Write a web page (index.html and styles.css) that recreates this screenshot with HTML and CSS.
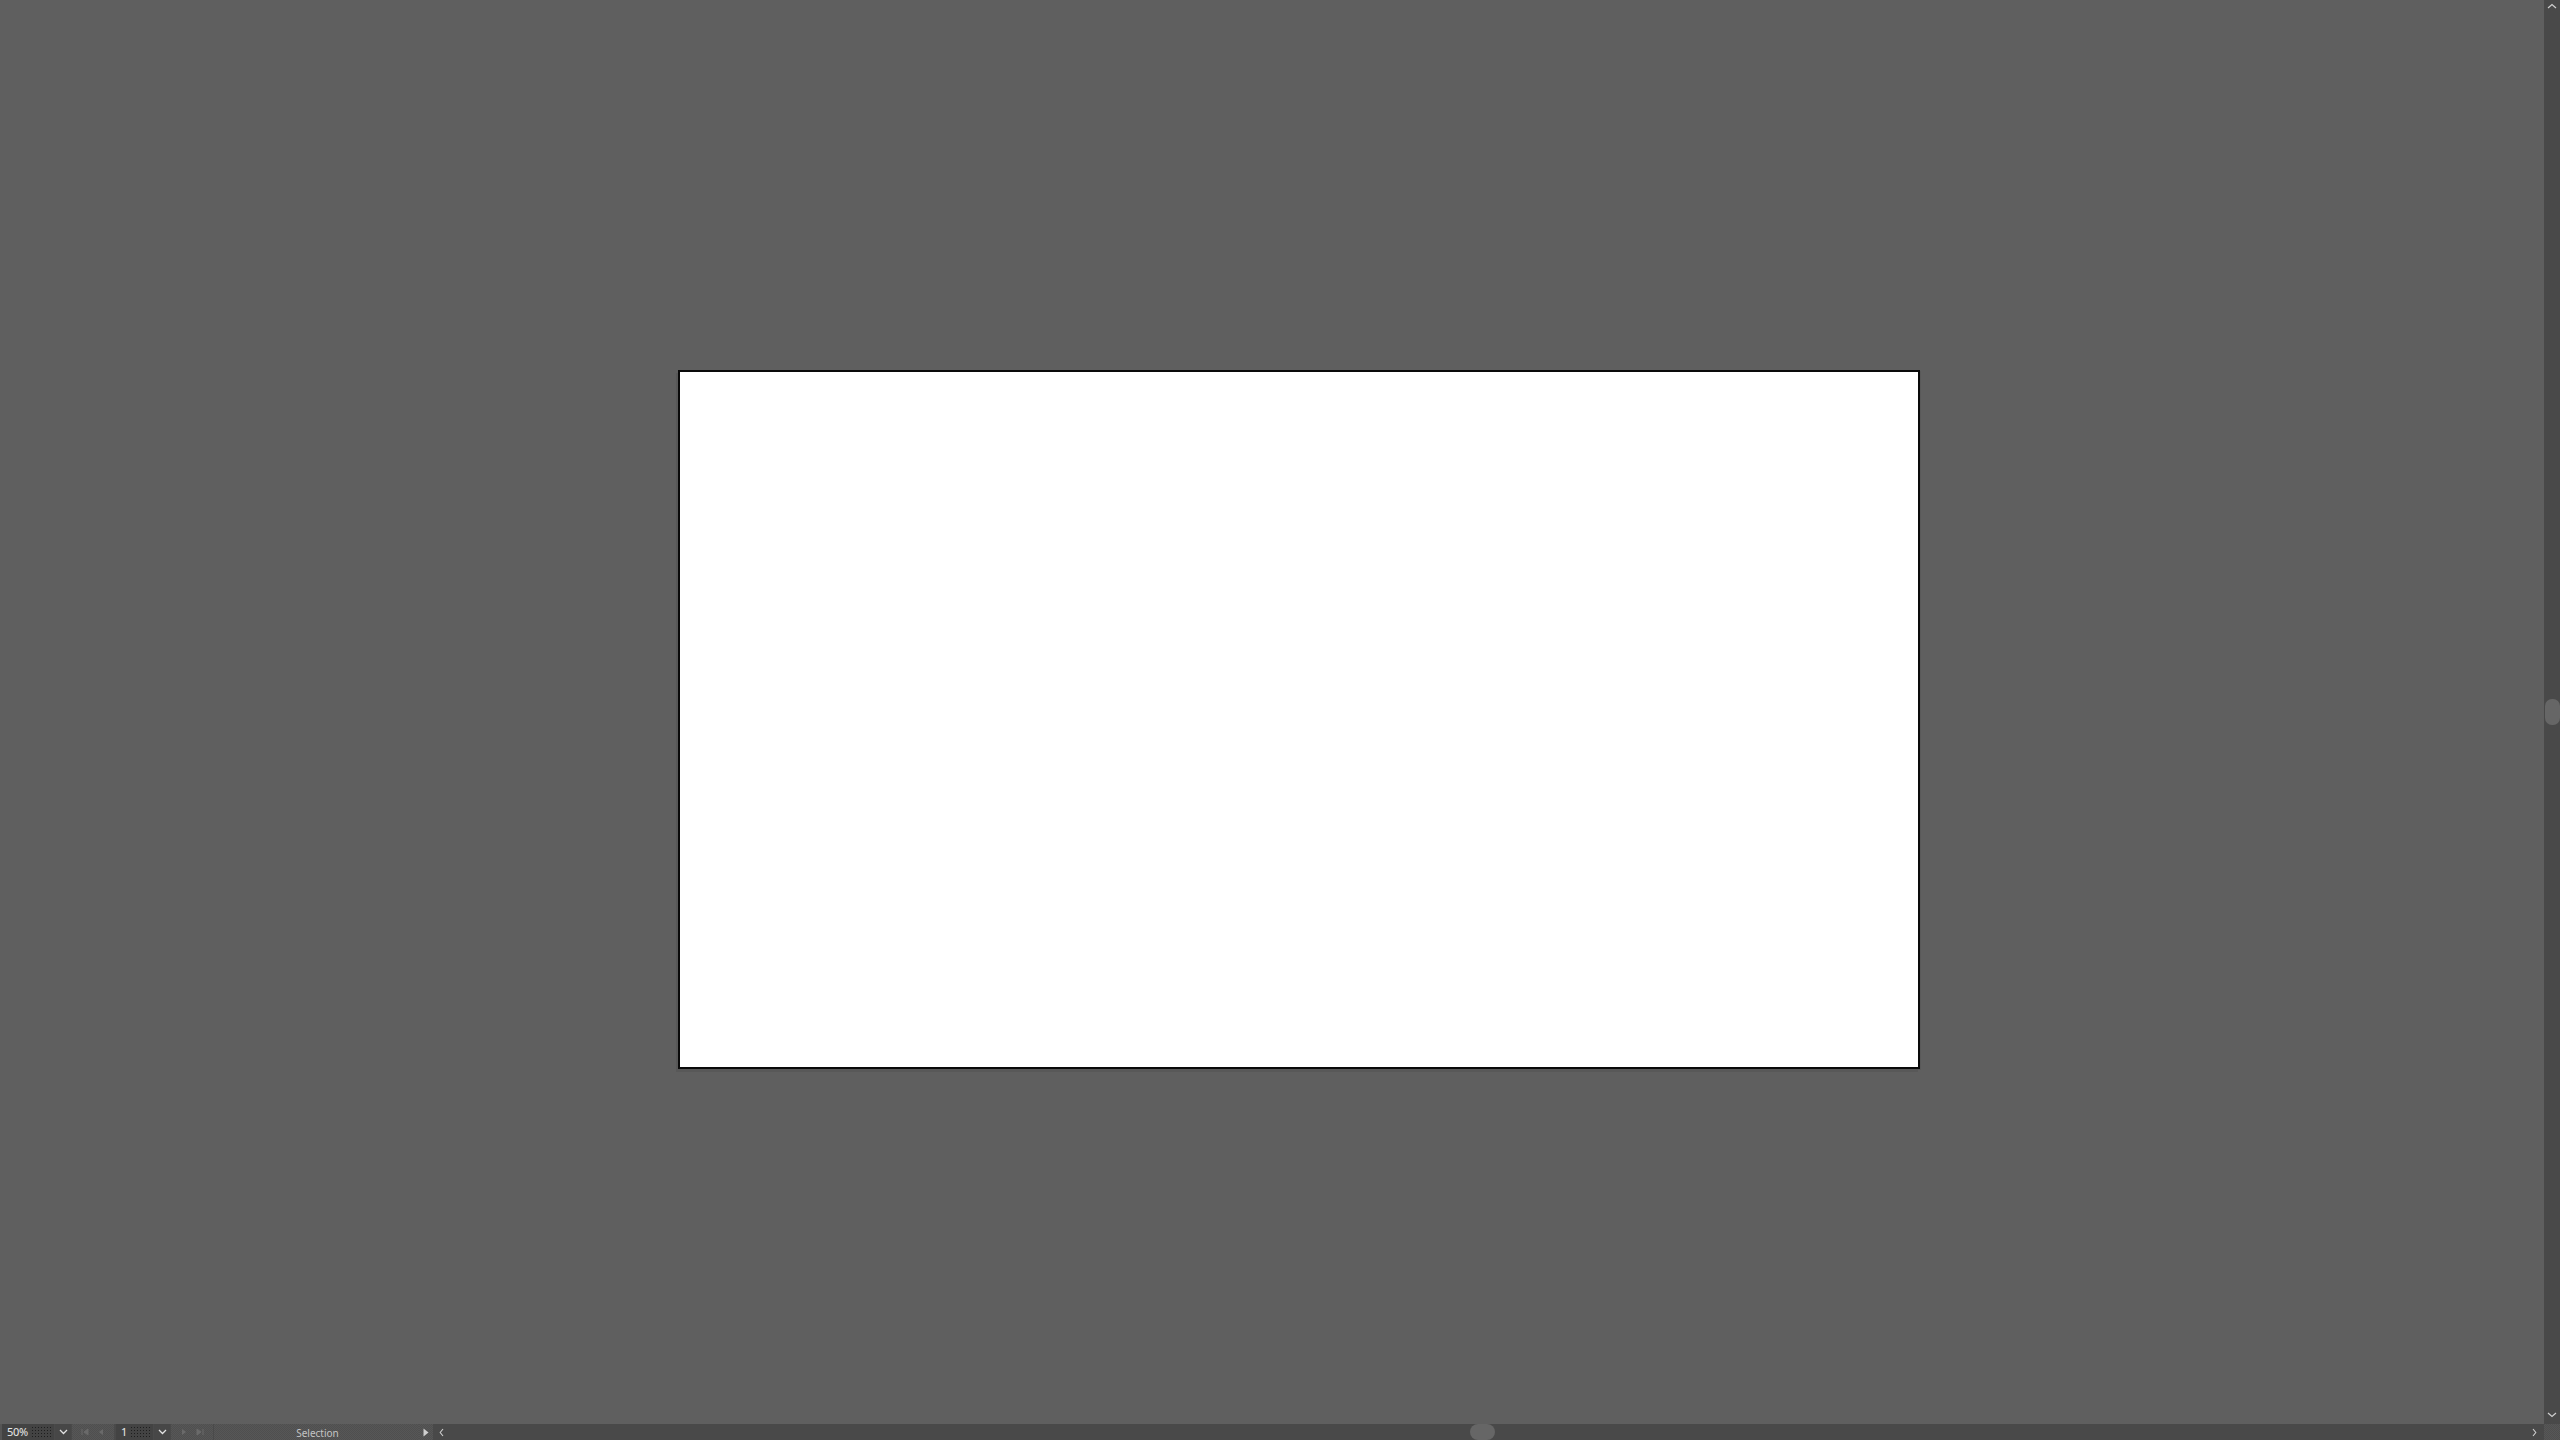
FILE: index.html
```html
<!DOCTYPE html>
<html>
<head>
<meta charset="utf-8">
<link rel="stylesheet" href="styles.css">
</head>
<body>
<div class="app">
  <div class="main">
    <div class="canvas">
      <div class="artboard"></div>
    </div>
    <div class="vscroll">
      <div class="vbtn top">
        <svg width="10" height="6" viewBox="0 0 10 6"><path d="M1 5 L5 1.5 L9 5" fill="none" stroke="#cfcfcf" stroke-width="1.2"/></svg>
      </div>
      <div class="vtrack"><div class="vthumb"></div></div>
      <div class="vbtn bottom">
        <svg width="10" height="6" viewBox="0 0 10 6"><path d="M1 1 L5 4.5 L9 1" fill="none" stroke="#cfcfcf" stroke-width="1.2"/></svg>
      </div>
    </div>
  </div>
  <div class="statusbar">
    <div class="edge"></div>
    <div class="field zoomfield"><span class="ftext">50%</span><span class="dots"></span></div>
    <div class="drop">
      <svg width="9" height="6" viewBox="0 0 9 6"><path d="M1 1 L4.5 4.5 L8 1" fill="none" stroke="#e0e0e0" stroke-width="1.3"/></svg>
    </div>
    <div class="tex navgroup">
      <svg width="8" height="8" viewBox="0 0 8 8"><path d="M1 1 V7 M7 1 L3 4 L7 7 Z" fill="#6a6a6a" stroke="#6a6a6a" stroke-width="1"/></svg>
      <svg width="8" height="8" viewBox="0 0 8 8"><path d="M6 1 L2 4 L6 7 Z" fill="#6a6a6a"/></svg>
    </div>
    <div class="field pagefield"><span class="ftext">1</span><span class="dots"></span></div>
    <div class="drop">
      <svg width="9" height="6" viewBox="0 0 9 6"><path d="M1 1 L4.5 4.5 L8 1" fill="none" stroke="#e0e0e0" stroke-width="1.3"/></svg>
    </div>
    <div class="tex navgroup">
      <svg width="8" height="8" viewBox="0 0 8 8"><path d="M2 1 L6 4 L2 7 Z" fill="#6a6a6a"/></svg>
      <svg width="8" height="8" viewBox="0 0 8 8"><path d="M7 1 V7 M1 1 L5 4 L1 7 Z" fill="#6a6a6a" stroke="#6a6a6a" stroke-width="1"/></svg>
    </div>
    <div class="tex status"><span class="stext">Selection</span></div>
    <div class="tex playbtn">
      <svg width="6" height="9" viewBox="0 0 6 9"><path d="M0.5 0.5 L5.5 4.5 L0.5 8.5 Z" fill="#d0d0d0"/></svg>
    </div>
    <div class="hscroll">
      <div class="harrow">
        <svg width="5" height="9" viewBox="0 0 5 9"><path d="M4 1 L1.2 4.5 L4 8" fill="none" stroke="#cfcfcf" stroke-width="1.1"/></svg>
      </div>
      <div class="htrack"><div class="hthumb"></div></div>
      <div class="harrow right">
        <svg width="5" height="9" viewBox="0 0 5 9"><path d="M1 1 L3.8 4.5 L1 8" fill="none" stroke="#cfcfcf" stroke-width="1.1"/></svg>
      </div>
    </div>
    <div class="tex corner"></div>
  </div>
</div>
</body>
</html>
```

FILE: styles.css
```css
* { box-sizing: border-box; }
html, body {
  margin: 0;
  padding: 0;
  width: 2560px;
  height: 1440px;
  overflow: hidden;
  background: #5f5f5f;
  font-family: "Noto Sans", "DejaVu Sans", sans-serif;
}
.app {
  display: flex;
  flex-direction: column;
  width: 2560px;
  height: 1440px;
}
.main {
  display: flex;
  height: 1424px;
}
.canvas {
  flex: 1;
  background: #5f5f5f;
  padding: 370px 0 0 678px;
}
.artboard {
  width: 1242px;
  height: 699px;
  background: #ffffff;
  border: 2px solid #0a0a0a;
  box-shadow: -2px 3px 0 #585858, 1px 1px 0 #595959;
}
.vscroll {
  width: 16px;
  background: #494949;
  display: flex;
  flex-direction: column;
}
.vbtn {
  height: 16px;
  display: flex;
  justify-content: center;
  align-items: center;
}
.vbtn.top { align-items: flex-start; padding-top: 3px; }
.vbtn.bottom { align-items: flex-end; padding-bottom: 6px; }
.vtrack {
  flex: 1;
  position: relative;
}
.vthumb {
  position: absolute;
  left: 1px;
  top: 683px;
  width: 15px;
  height: 26px;
  border-radius: 7px;
  background: #666666;
}
.statusbar {
  height: 16px;
  display: flex;
  align-items: stretch;
  background: #4a4a4a;
  font-size: 10px;
  line-height: 16px;
}
.edge { width: 2px; background: #555555; }
.field {
  display: flex;
  align-items: center;
  background: #434343;
  color: #e8e8e8;
  padding-left: 5px;
  gap: 3px;
}
.zoomfield { width: 52px; }
.pagefield { width: 37px; margin-left: 2px; padding-left: 5px; }
.ftext { font-size: 11px; letter-spacing: -0.3px; }
.dots {
  flex: 1;
  height: 12px;
  margin-right: 2px;
  background-image: radial-gradient(circle, #1e1e1e 0.7px, transparent 0.9px);
  background-size: 3px 3px;
}
.drop {
  width: 16px;
  margin-left: 1px;
  display: flex;
  align-items: center;
  justify-content: center;
  background: #474747;
}
.tex {
  background-color: #535353;
  background-image: repeating-conic-gradient(#575757 0 25%, #4f4f4f 0 50%);
  background-size: 2px 2px;
}
.navgroup {
  width: 42px;
  margin-left: 1px;
  display: flex;
  align-items: center;
  justify-content: space-evenly;
}
.status {
  width: 205px;
  margin-left: 1px;
  display: flex;
  justify-content: center;
  align-items: center;
  color: #c4c4c4;
  padding-left: 2px;
  padding-top: 1px;
}
.stext { font-size: 10px; }
.playbtn {
  width: 14px;
  display: flex;
  align-items: center;
  justify-content: center;
}
.hscroll {
  flex: 1;
  display: flex;
  background: #494949;
}
.harrow {
  width: 16px;
  display: flex;
  align-items: center;
  justify-content: center;
}
.harrow.right { justify-content: flex-start; padding-left: 4px; }
.htrack {
  flex: 1;
  position: relative;
}
.hthumb {
  position: absolute;
  left: 1021px;
  top: 0;
  width: 25px;
  height: 16px;
  border-radius: 8px;
  background: #666666;
}
.corner { width: 16px; }
```
